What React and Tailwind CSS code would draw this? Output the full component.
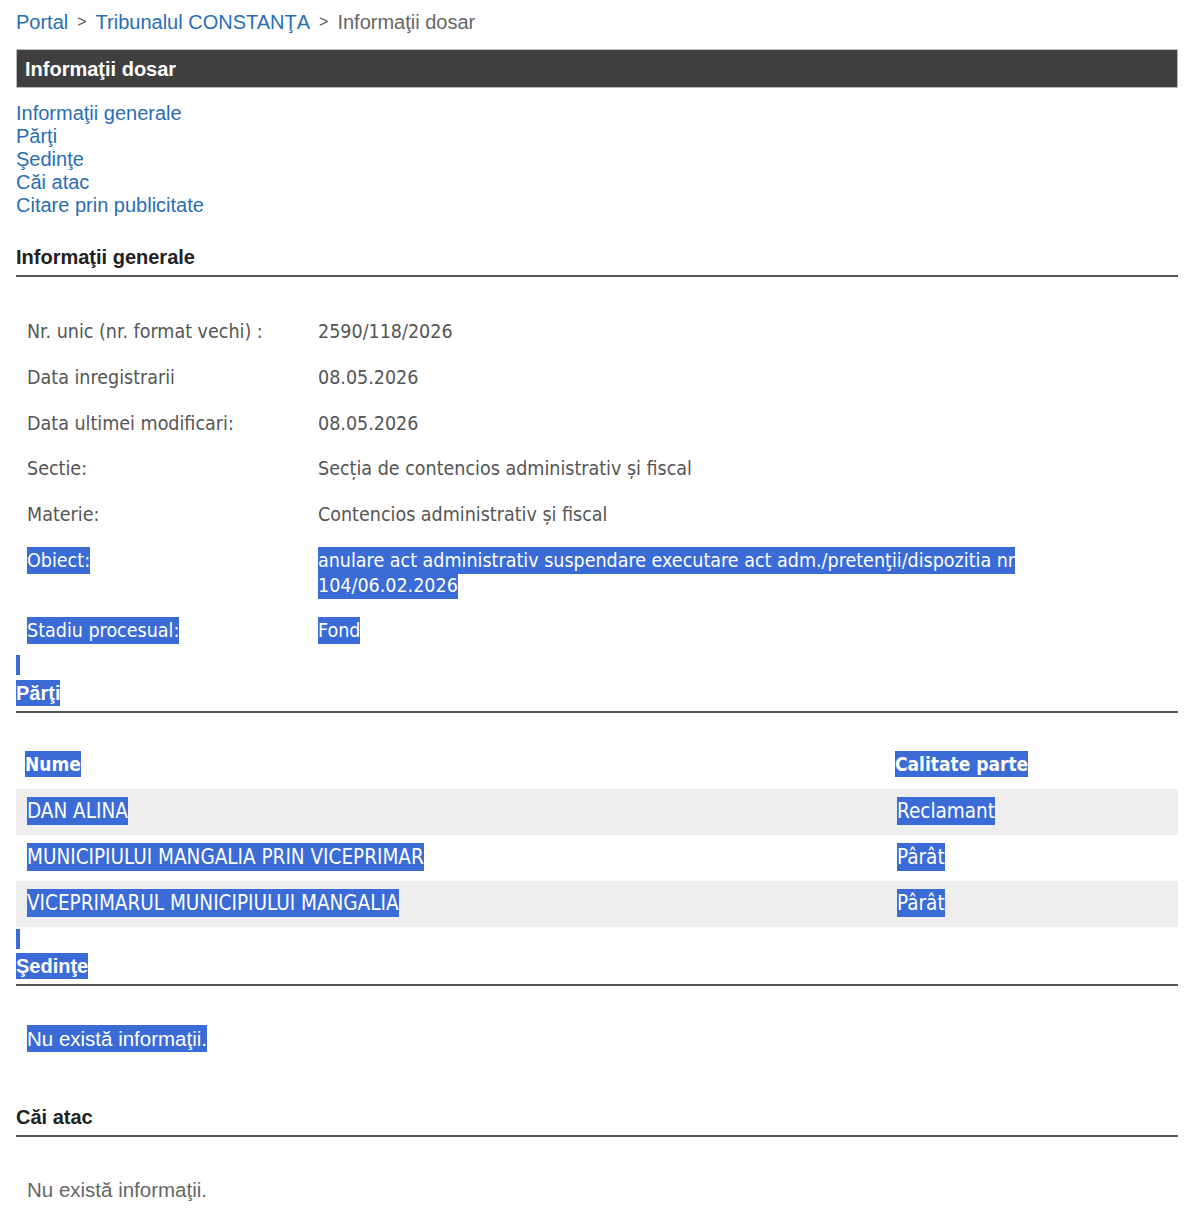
import React from 'react';

const SEL = 'bg-[#3a6bd6] text-white py-[2px]';
const DATA_FONT = "font-['DejaVu_Sans_Condensed',Tahoma,sans-serif]";

function Sel({ children, className = '' }) {
  return <span className={`${SEL} ${className}`}>{children}</span>;
}

function SectionTitle({ children, selected }) {
  return (
    <div className="border-b-2 border-[#555] pb-1">
      {selected ? (
        <Sel className="text-[20px] font-bold leading-[24px]">{children}</Sel>
      ) : (
        <span className="text-[20px] font-bold leading-[24px] text-[#222]">{children}</span>
      )}
    </div>
  );
}

const info = [
  ['Nr. unic (nr. format vechi) :', '2590/118/2026'],
  ['Data inregistrarii', '08.05.2026'],
  ['Data ultimei modificari:', '08.05.2026'],
  ['Sectie:', 'Secția de contencios administrativ și fiscal'],
  ['Materie:', 'Contencios administrativ și fiscal'],
];

const parti = [
  ['DAN ALINA', 'Reclamant'],
  ['MUNICIPIULUI MANGALIA PRIN VICEPRIMAR', 'Pârât'],
  ['VICEPRIMARUL MUNICIPIULUI MANGALIA', 'Pârât'],
];

export default function App() {
  return (
    <div className="bg-white min-h-screen pl-4 pr-[22px] pt-[10px] pb-6 font-['Liberation_Sans',Arial,sans-serif] text-[#444]">
      {/* Breadcrumb */}
      <div className="text-[20px] leading-[24px] flex items-center gap-[9px]">
        <a className="text-[#2a6db5]">Portal</a>
        <span className="text-[#555] text-[16px]">&gt;</span>
        <a className="text-[#2a6db5]">Tribunalul CONSTANŢA</a>
        <span className="text-[#555] text-[16px]">&gt;</span>
        <span className="text-[#666]">Informaţii dosar</span>
      </div>

      {/* Title bar */}
      <div className="mt-[15px] h-[39px] bg-[#3f3f3f] border border-[#bbb] flex items-center px-2">
        <span className="text-white text-[20px] font-bold">Informaţii dosar</span>
      </div>

      {/* Anchor links */}
      <div className="mt-[14px] flex flex-col text-[20px] leading-[23px] text-[#2a6db5]">
        <a>Informaţii generale</a>
        <a>Părţi</a>
        <a>Şedinţe</a>
        <a>Căi atac</a>
        <a>Citare prin publicitate</a>
      </div>

      {/* Informatii generale */}
      <div className="mt-[28px]">
        <SectionTitle>Informaţii generale</SectionTitle>
      </div>

      <div className={`${DATA_FONT} text-[19.5px] leading-[25px] text-[#555] px-[11px] pt-[42px]`}>
        {info.map(([k, v]) => (
          <div key={k} className="flex h-[45.8px]">
            <div className="w-[291px]">{k}</div>
            <div>{v}</div>
          </div>
        ))}
        <div className="flex pb-[20px]">
          <div className="w-[291px]">
            <Sel>Obiect:</Sel>
          </div>
          <div className="w-[730px]">
            <Sel>anulare act administrativ suspendare executare act adm./pretenţii/dispozitia nr 104/06.02.2026</Sel>
          </div>
        </div>
        <div className="flex">
          <div className="w-[291px]">
            <Sel>Stadiu procesual:</Sel>
          </div>
          <div>
            <Sel>Fond</Sel>
          </div>
        </div>
      </div>

      {/* Parti */}
      <div className="mt-[12px] w-[4px] h-[20px] bg-[#3a6bd6]" />
      <div className="mt-[6px]">
        <SectionTitle selected>Părţi</SectionTitle>
      </div>

      <div className={`${DATA_FONT} leading-[25px] mt-[39px]`}>
        <div className="flex h-[28px] items-start px-[9px] text-[19px]">
          <div className="w-[870px]">
            <Sel className="font-bold">Nume</Sel>
          </div>
          <div>
            <Sel className="font-bold">Calitate parte</Sel>
          </div>
        </div>
        <div className="mt-[9px] text-[20.5px]">
          {parti.map(([n, c], i) => (
            <div key={n} className={`flex items-center h-[46px] px-[11px] ${i % 2 === 0 ? 'bg-[#eeeeee]' : 'bg-white'}`}>
              <div className="w-[870px]">
                <Sel>{n}</Sel>
              </div>
              <div>
                <Sel>{c}</Sel>
              </div>
            </div>
          ))}
        </div>
      </div>

      {/* Sedinte */}
      <div className="mt-[2px] w-[4px] h-[20px] bg-[#3a6bd6]" />
      <div className="mt-[5px]">
        <SectionTitle selected>Şedinţe</SectionTitle>
      </div>
      <div className="px-[11px] pt-[41px] pb-[54px] text-[20.5px] leading-[24px]">
        <Sel>Nu există informaţii.</Sel>
      </div>

      {/* Cai atac */}
      <SectionTitle>Căi atac</SectionTitle>
      <div className="px-[11px] pt-[41px] text-[20.5px] leading-[24px] text-[#666]">Nu există informaţii.</div>
    </div>
  );
}
